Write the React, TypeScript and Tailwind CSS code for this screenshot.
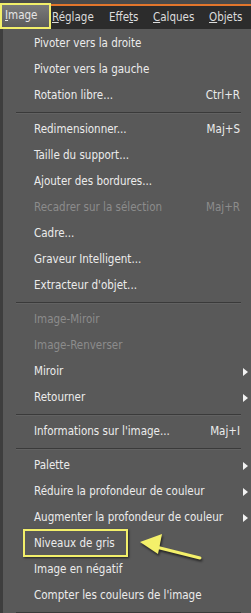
type Item =
  | { kind: "sep" }
  | { kind: "item"; label: string; shortcut?: string; disabled?: boolean; sub?: boolean };

const ITEMS: Item[] = [
  { kind: "item", label: "Pivoter vers la droite" },
  { kind: "item", label: "Pivoter vers la gauche" },
  { kind: "item", label: "Rotation libre...", shortcut: "Ctrl+R" },
  { kind: "sep" },
  { kind: "item", label: "Redimensionner...", shortcut: "Maj+S" },
  { kind: "item", label: "Taille du support..." },
  { kind: "item", label: "Ajouter des bordures..." },
  { kind: "item", label: "Recadrer sur la sélection", shortcut: "Maj+R", disabled: true },
  { kind: "item", label: "Cadre..." },
  { kind: "item", label: "Graveur Intelligent..." },
  { kind: "item", label: "Extracteur d'objet..." },
  { kind: "sep" },
  { kind: "item", label: "Image-Miroir", disabled: true },
  { kind: "item", label: "Image-Renverser", disabled: true },
  { kind: "item", label: "Miroir", sub: true },
  { kind: "item", label: "Retourner", sub: true },
  { kind: "sep" },
  { kind: "item", label: "Informations sur l'image...", shortcut: "Maj+I" },
  { kind: "sep" },
  { kind: "item", label: "Palette", sub: true },
  { kind: "item", label: "Réduire la profondeur de couleur", sub: true },
  { kind: "item", label: "Augmenter la profondeur de couleur", sub: true },
  { kind: "item", label: "Niveaux de gris" },
  { kind: "item", label: "Image en négatif" },
  { kind: "item", label: "Compter les couleurs de l'image" },
  { kind: "sep" },
];

function MenuRow({ item }: { item: Item }) {
  if (item.kind === "sep") {
    return (
      <div className="flex h-[8px] items-center pl-[13px] pr-[10px]">
        <div className="h-[2px] w-full border-t border-[#3a3a3a] border-b border-b-[#626262]" />
      </div>
    );
  }
  const color = item.disabled ? "text-[#8c8c8c]" : "text-[#ececec]";
  return (
    <div className={`flex h-[26px] items-center justify-between pl-[31px] ${item.sub ? "pr-[3px]" : "pr-[11px]"} ${color}`}>
      <span>{item.label}</span>
      {item.shortcut && <span>{item.shortcut}</span>}
      {item.sub && (
        <svg width="5" height="8" viewBox="0 0 5 8">
          <path d="M0 0 L5 4 L0 8 Z" fill="#f2f2f2" />
        </svg>
      )}
    </div>
  );
}

function MenuBar() {
  return (
    <div className="relative">
      <div className="h-[4px] bg-[#4a4a4a]" />
      <div className="h-[2px] bg-[#e3762c]" />
      <div className="flex h-[23px] items-center bg-[#2c2c2c] pl-[52px] text-[#dcdcdc]">
        <span className="w-[57px]">
          <u>R</u>églage
        </span>
        <span className="w-[44px]">
          Effe<u>t</u>s
        </span>
        <span className="w-[56px]">
          <u>C</u>alques
        </span>
        <span>
          <u>O</u>bjets
        </span>
      </div>
      <div className="absolute left-0 top-[3px] flex h-[26px] w-[51px] items-center border-2 border-[#f2ef6a] bg-gradient-to-b from-[#7a7a7a] to-[#5c5c5c] pl-[3px] text-[#e6e6e6]">
        <u>I</u>mage
      </div>
    </div>
  );
}

export default function App() {
  return (
    <div
      className="relative h-[613px] w-[251px] overflow-hidden bg-[#595959] text-[11.5px]"
      style={{ fontFamily: '"DejaVu Sans Condensed", "DejaVu Sans", sans-serif', fontStretch: "condensed" }}
    >
      <MenuBar />
      <div className="border-l-[3px] border-[#3e3e3e] pt-[2px]">
        {ITEMS.map((item, i) => (
          <MenuRow key={i} item={item} />
        ))}
      </div>

      {/* annotation */}
      <div className="absolute left-[23px] top-[529px] h-[28px] w-[105px] border-2 border-[#f2ef6a] shadow-[1px_1px_2px_rgba(0,0,0,0.6)]" />
      <svg className="absolute left-[136px] top-[530px]" width="72" height="34" viewBox="0 0 72 34">
        <g style={{ filter: "drop-shadow(1px 2px 1px rgba(0,0,0,0.6))" }}>
          <line x1="20" y1="17" x2="64" y2="28" stroke="#f4f06a" strokeWidth="3" strokeLinecap="round" />
          <path d="M4 12 L26 4 L22 24 Z" fill="#f4f06a" />
        </g>
      </svg>
    </div>
  );
}
